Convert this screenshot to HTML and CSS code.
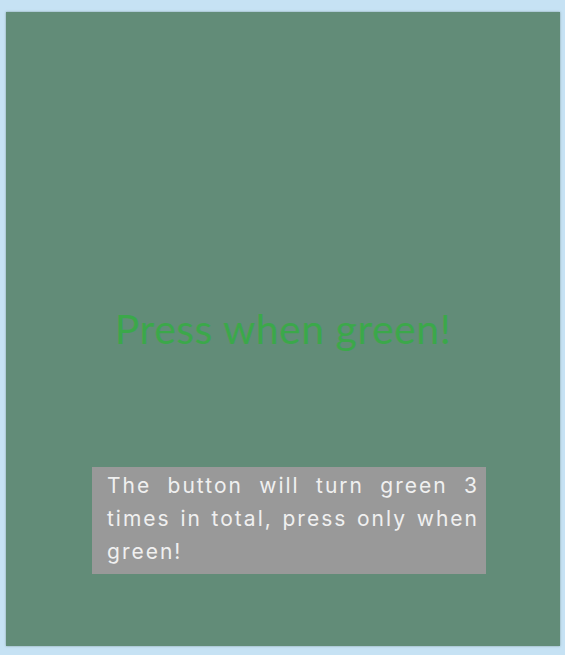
FILE: index.html
```html
<!DOCTYPE html>
<html>
<head>
<meta charset="utf-8">
<link rel="stylesheet" href="styles.css">
</head>
<body>
<div class="stage">
  <div class="spacer"></div>
  <h1 class="title">Press when green!</h1>
  <div class="bottom">
    <p class="info">The button will turn green 3 times in total, press only when green!</p>
  </div>
</div>
</body>
</html>
```
FILE: styles.css
```css
html, body {
  margin: 0;
  padding: 0;
  background: #c6e2f4;
}
body {
  padding: 12px 5px 9px 6px;
  height: 655px;
  box-sizing: border-box;
}
.stage {
  height: 634px;
  background: #628c78;
  box-shadow: 0 0 2px rgba(60, 90, 80, 0.5);
  display: grid;
  grid-template-rows: 1fr auto 1fr;
}
.title {
  margin: 0;
  text-align: center;
  font-family: "Lato", sans-serif;
  font-weight: 400;
  font-size: 41px;
  line-height: 44px;
  letter-spacing: 0.5px;
  color: #3ba84a;
}
.bottom {
  display: flex;
  justify-content: center;
  align-items: flex-start;
  padding-top: 116px;
  padding-left: 12px;
}
.info {
  margin: 0;
  width: 394px;
  box-sizing: border-box;
  padding: 2px 7px 6px 15px;
  background: #999999;
  color: #f0f0f0;
  font-family: "Inter", sans-serif;
  font-size: 21px;
  line-height: 33px;
  letter-spacing: 2px;
  text-align: justify;
}
```
